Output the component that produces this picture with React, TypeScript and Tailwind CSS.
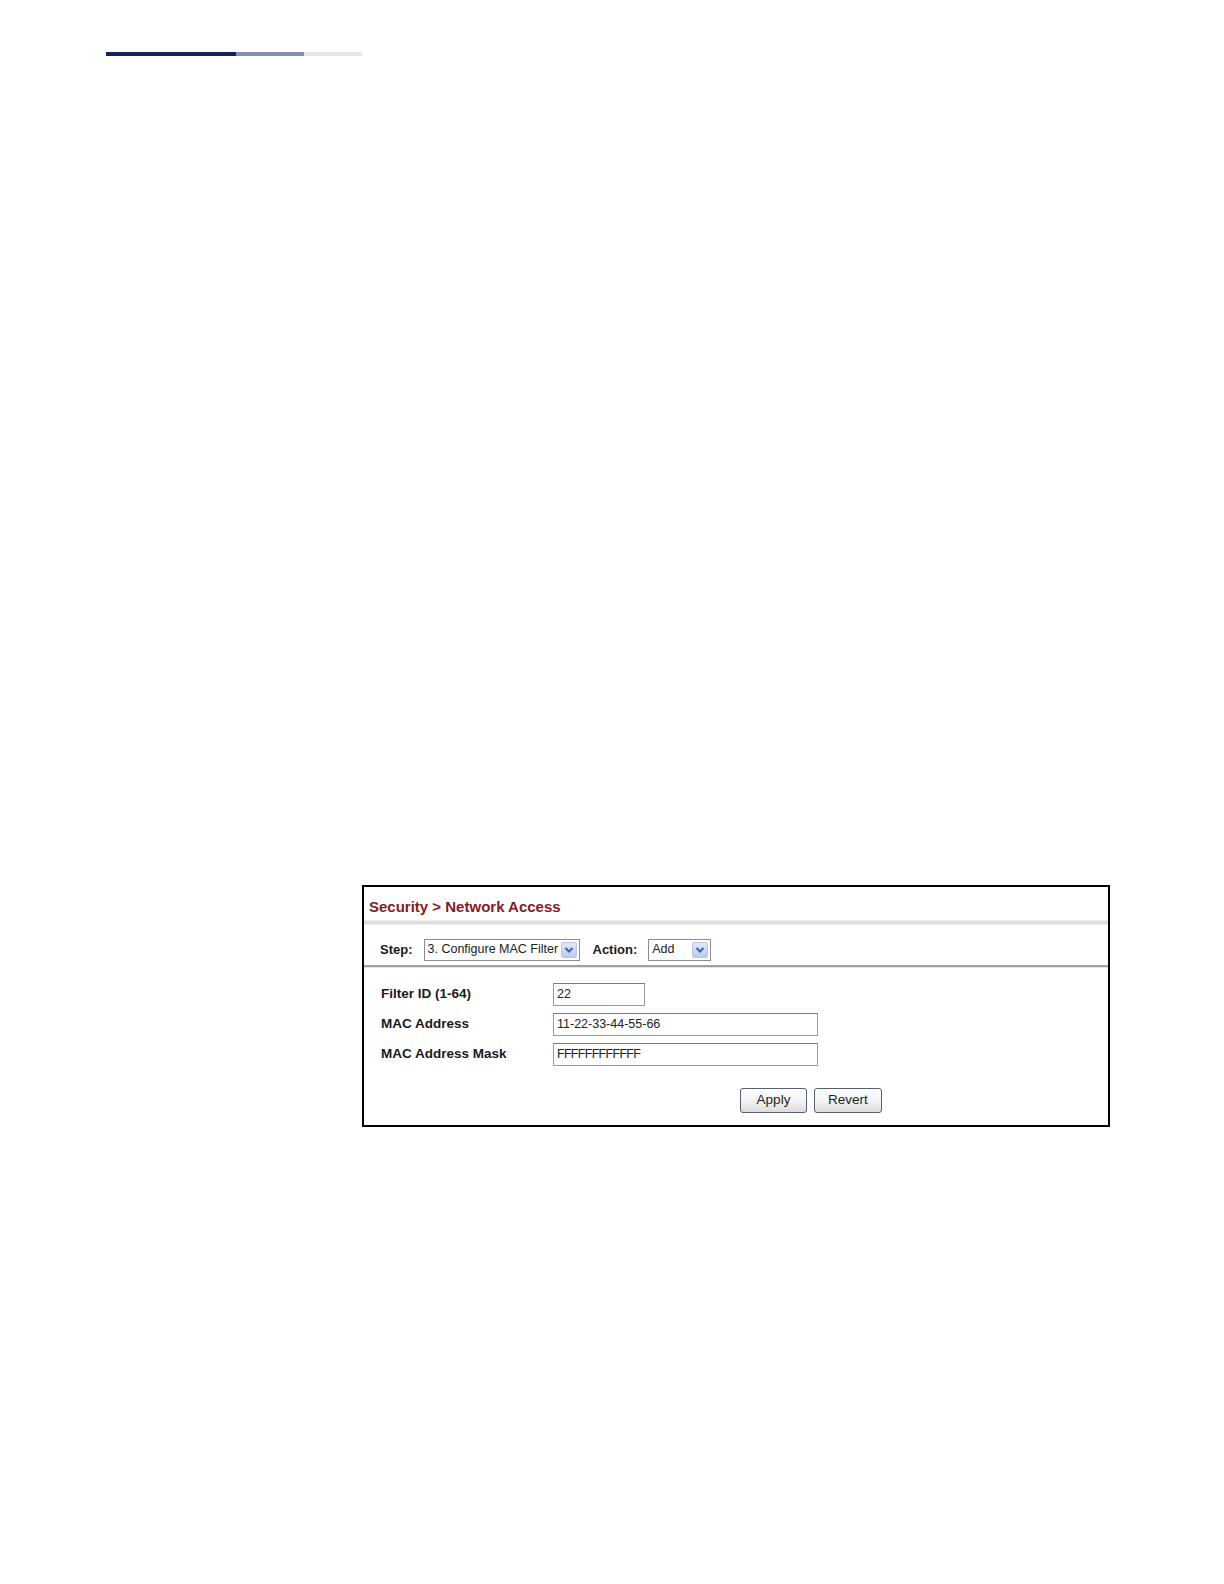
import React from "react";

function Arrow() {
  return (
    <span className="flex h-[16px] w-[16px] items-center justify-center rounded-[2px] border border-[#b8c8e6] bg-gradient-to-b from-[#dfe8f8] to-[#b9cbef]">
      <svg width="10" height="8" viewBox="0 0 10 8">
        <path d="M1.5 2 L5 5.5 L8.5 2" stroke="#3a5fb0" strokeWidth="2" fill="none" />
      </svg>
    </span>
  );
}

function Select({ text, width }: { text: string; width: string }) {
  return (
    <div className={`flex h-[22px] items-center justify-between border border-[#8c8c8c] bg-white pl-[3px] pr-[2px] ${width}`}>
      <span className="text-[12.5px] text-[#222] leading-none">{text}</span>
      <Arrow />
    </div>
  );
}

function Field({ label, value, width, vcls }: { label: string; value: string; width: string; vcls?: string }) {
  return (
    <div className="flex items-center h-[23px]">
      <div className="w-[172px] text-[13.5px] font-bold text-[#1a1a1a]">{label}</div>
      <div className={`h-[23px] border border-[#9a9a9a] border-t-[#7a7a7a] bg-white pl-[3px] flex items-center text-[12.5px] text-[#222] ${width} ${vcls ?? ""}`}>
        {value}
      </div>
    </div>
  );
}

function Btn({ text, width }: { text: string; width: string }) {
  return (
    <div className={`flex h-[25px] items-center justify-center rounded-[3px] border border-[#555f70] bg-gradient-to-b from-white via-[#f4f4f4] to-[#dcdcdc] text-[13.5px] text-[#222] ${width}`}>
      {text}
    </div>
  );
}

export default function App() {
  return (
    <div className="bg-white pb-[400px]" style={{ fontFamily: '"Liberation Sans", Arial, sans-serif' }}>
      <div className="pt-[52px] pl-[106px] flex">
        <div className="h-[4px] w-[130px] bg-[#0f2460]" />
        <div className="h-[4px] w-[68px] bg-[#8091b3]" />
        <div className="h-[4px] w-[58px] bg-[#e6e7e9]" />
      </div>
      <div className="ml-[362px] mt-[829px] w-[748px] h-[242px] border-2 border-black flex flex-col">
        <div className="pl-[5px] pt-[10px] h-[33px] text-[15px] font-bold text-[#861a1f] leading-[20px]">
          Security &gt; Network Access
        </div>
        <div className="h-[5px] bg-gradient-to-b from-[#f2f2f2] via-[#d9d9d9] to-[#efefef]" />
        <div className="flex items-center h-[23px] mt-[13px] pl-[16px]">
          <span className="text-[13px] font-bold text-[#1a1a1a] mr-[11px]">Step:</span>
          <Select text="3. Configure MAC Filter" width="w-[156px]" />
          <span className="text-[13px] font-bold text-[#1a1a1a] ml-[13px] mr-[11px]">Action:</span>
          <Select text="Add" width="w-[63px]" />
        </div>
        <div className="mt-[4px] h-[2px] bg-[#a0a0a0]" />
        <div className="h-[1px] bg-[#e4e4e4]" />
        <div className="flex flex-col gap-[7px] pl-[17px] mt-[15px]">
          <Field label="Filter ID (1-64)" value="22" width="w-[92px]" />
          <Field label="MAC Address" value="11-22-33-44-55-66" width="w-[265px]" />
          <Field label="MAC Address Mask" value="FFFFFFFFFFFF" width="w-[265px]" vcls="tracking-[-0.7px]" />
        </div>
        <div className="flex gap-[7px] pl-[376px] mt-[22px]">
          <Btn text="Apply" width="w-[67px]" />
          <Btn text="Revert" width="w-[68px]" />
        </div>
      </div>
    </div>
  );
}
